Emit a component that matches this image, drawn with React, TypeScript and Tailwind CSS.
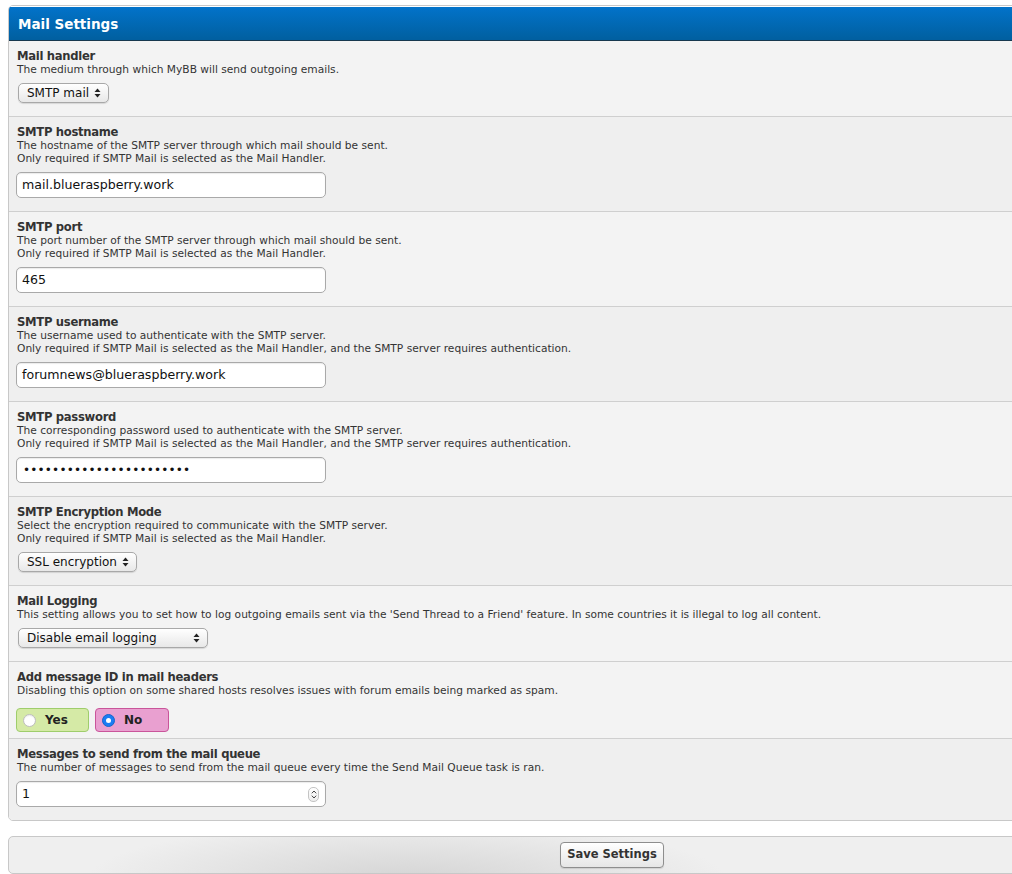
import React from "react";

const Arrows = () => (
  <svg width="7" height="10" viewBox="0 0 7 10" className="shrink-0">
    <path d="M3.5 0.5 L6.5 4 L0.5 4 Z" fill="#222" />
    <path d="M3.5 9.5 L6.5 6 L0.5 6 Z" fill="#222" />
  </svg>
);

const Select = ({ label, w }: { label: string; w: string }) => (
  <div
    className={`ml-[2px] flex items-center h-[20px] ${w} rounded-[5px] border border-[#a8a8a8] bg-linear-to-b from-white to-[#e8e8e8] pl-[8px] pr-[7px] text-[12px] leading-[14px] text-[#111] shadow-[0_1px_1px_rgba(0,0,0,0.12)]`}
  >
    <span className="flex-1 whitespace-nowrap">{label}</span>
    <Arrows />
  </div>
);

const TextBox = ({ children }: { children: React.ReactNode }) => (
  <div className="relative flex items-center w-[310px] h-[26px] rounded-[5px] border border-[#a9a9a9] bg-white pl-[5px] text-[12.6px] text-[#111] shadow-[inset_0_1px_1px_rgba(0,0,0,0.08)]">
    {children}
  </div>
);

type RowProps = {
  title: string;
  desc: string[];
  bg: string;
  last?: boolean;
  children: React.ReactNode;
  ctrl?: string;
  pb?: string;
};

const Row = ({ title, desc, bg, last, children, ctrl = "mt-[7px]", pb = "pb-[13px]" }: RowProps) => (
  <div className={`px-[7px] pt-[8px] ${pb} ${bg} ${last ? "" : "border-b border-[#cfcfcf]"}`}>
    <div className="text-[11.6px] tracking-[-0.3px] leading-[14px] font-bold text-[#333] pl-[1px] whitespace-nowrap">
      {title}
    </div>
    {desc.map((d, i) => (
      <div key={i} className="text-[10.65px] leading-[13px] text-[#333] pl-[1px] whitespace-nowrap">
        {d}
      </div>
    ))}
    <div className={`flex ${ctrl}`}>{children}</div>
  </div>
);

const L = "bg-[#f3f3f3]";
const D = "bg-[#efefef]";
const req = "Only required if SMTP Mail is selected as the Mail Handler.";
const reqAuth =
  "Only required if SMTP Mail is selected as the Mail Handler, and the SMTP server requires authentication.";

export default function App() {
  return (
    <div className="w-[1012px] h-[874px] overflow-hidden bg-white font-['DejaVu_Sans',sans-serif]">
      <div className="pt-[5px] pl-[8px]">
        <div className="w-[1208px] border border-[#c8c8c8] rounded-[5px] overflow-hidden">
          <div className="h-[35px] border-t border-white border-b border-b-[#17384e] bg-linear-to-b from-[#0273ca] to-[#015f9f] flex items-center pl-[9px]">
            <span className="text-white font-bold text-[13.5px] leading-[16px]">Mail Settings</span>
          </div>

          <Row title="Mail handler" desc={["The medium through which MyBB will send outgoing emails."]} bg={L}>
            <Select label="SMTP mail" w="w-[91px]" />
          </Row>

          <Row
            title="SMTP hostname"
            desc={["The hostname of the SMTP server through which mail should be sent.", req]}
            bg={D}
          >
            <TextBox>mail.blueraspberry.work</TextBox>
          </Row>

          <Row
            title="SMTP port"
            desc={["The port number of the SMTP server through which mail should be sent.", req]}
            bg={L}
          >
            <TextBox>465</TextBox>
          </Row>

          <Row
            title="SMTP username"
            desc={["The username used to authenticate with the SMTP server.", reqAuth]}
            bg={D}
          >
            <TextBox>forumnews@blueraspberry.work</TextBox>
          </Row>

          <Row
            title="SMTP password"
            desc={["The corresponding password used to authenticate with the SMTP server.", reqAuth]}
            bg={L}
          >
            <TextBox>
              <span className="text-[12px] tracking-[0.2px] pl-[1px]">{"\u2022".repeat(23)}</span>
            </TextBox>
          </Row>

          <Row
            title="SMTP Encryption Mode"
            desc={["Select the encryption required to communicate with the SMTP server.", req]}
            bg={D}
          >
            <Select label="SSL encryption" w="w-[119px]" />
          </Row>

          <Row
            title="Mail Logging"
            desc={[
              "This setting allows you to set how to log outgoing emails sent via the 'Send Thread to a Friend' feature. In some countries it is illegal to log all content.",
            ]}
            bg={L}
          >
            <Select label="Disable email logging" w="w-[190px]" />
          </Row>

          <Row
            title="Add message ID in mail headers"
            desc={["Disabling this option on some shared hosts resolves issues with forum emails being marked as spam."]}
            bg={L}
            ctrl="mt-[11px]"
            pb="pb-[6px]"
          >
            <div className="flex gap-[6px]">
              <div className="flex items-center w-[73px] h-[24px] rounded-[4px] border border-[#9fcd6c] bg-[#d5eaa6] pl-[6px]">
                <span className="w-[13px] h-[13px] rounded-full border border-[#bdbdbd] bg-white shadow-[inset_0_1px_1px_rgba(0,0,0,0.08)]" />
                <span className="ml-[9px] text-[12px] font-bold text-[#222]">Yes</span>
              </div>
              <div className="flex items-center w-[74px] h-[24px] rounded-[4px] border border-[#c9559a] bg-[#e9a0d0] pl-[6px]">
                <span className="w-[13px] h-[13px] rounded-full bg-[#1b7cf4] border border-[#1766c9] flex items-center justify-center">
                  <span className="w-[5px] h-[5px] rounded-full bg-white" />
                </span>
                <span className="ml-[9px] text-[12px] font-bold text-[#222]">No</span>
              </div>
            </div>
          </Row>

          <Row
            title="Messages to send from the mail queue"
            desc={["The number of messages to send from the mail queue every time the Send Mail Queue task is ran."]}
            bg={D}
            last
          >
            <TextBox>
              <span className="flex-1">1</span>
              <span className="mr-[6px] w-[11px] h-[15px] rounded-[5px] border border-[#c4c4c4] bg-linear-to-b from-white to-[#ededed] flex flex-col items-center justify-center gap-[1px]">
                <svg width="6" height="4" viewBox="0 0 6 4">
                  <path d="M0.8 3.3 L3 1 L5.2 3.3" fill="none" stroke="#444" strokeWidth="1" />
                </svg>
                <svg width="6" height="4" viewBox="0 0 6 4">
                  <path d="M0.8 0.7 L3 3 L5.2 0.7" fill="none" stroke="#444" strokeWidth="1" />
                </svg>
              </span>
            </TextBox>
          </Row>
        </div>

        <div className="mt-[15px] w-[1208px] h-[38px] border border-[#c8c8c8] rounded-[5px] bg-[#efefef] bg-[radial-gradient(ellipse_320px_60px_at_33%_120%,#d4d4d4,#efefef)] flex items-center justify-center">
          <div className="h-[26px] w-[104px] rounded-[4px] border border-[#8e8e8e] bg-linear-to-b from-white to-[#e6e6e6] flex items-center justify-center text-[11.5px] font-bold text-[#333] shadow-[0_1px_1px_rgba(0,0,0,0.1)]">
            Save Settings
          </div>
        </div>
      </div>
    </div>
  );
}
